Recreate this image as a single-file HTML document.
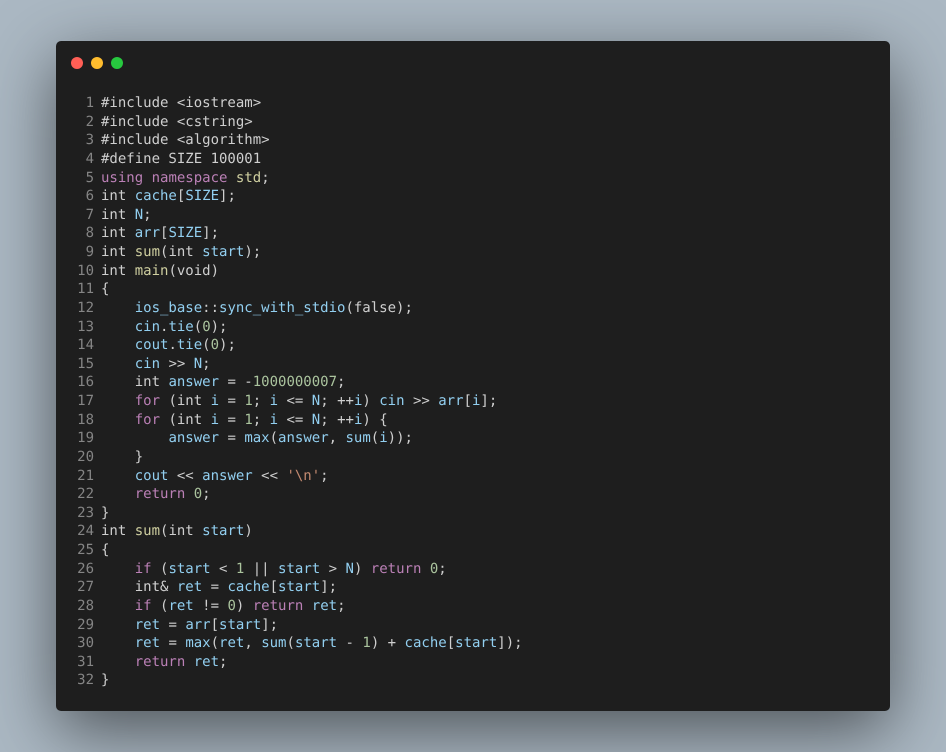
<!DOCTYPE html>
<html>
<head>
<meta charset="utf-8">
<style>
html,body{margin:0;padding:0;width:946px;height:752px;overflow:hidden;background:#abb8c3;}
#win{position:absolute;left:56px;top:41px;width:834px;height:670px;background:#1e1e1e;border-radius:5px;box-shadow:0 20px 68px rgba(0,0,0,.55);}
.d{position:absolute;top:16px;width:12px;height:12px;border-radius:50%;}
#code{position:absolute;left:101px;top:94px;margin:0;font:14px/18.62px "DejaVu Sans Mono",monospace;color:#cfcfcf;white-space:pre;filter:blur(.3px);text-rendering:geometricPrecision;}
#nums{position:absolute;left:60px;width:34px;top:94px;margin:0;font:14px/18.62px "DejaVu Sans Mono",monospace;color:#858585;text-align:right;white-space:pre;filter:blur(.3px);text-rendering:geometricPrecision;}
.k{color:#bb80b6}.v{color:#92cff0}.f{color:#cfcfa0}.n{color:#abc49e}.s{color:#c48a70}
</style>
</head>
<body>
<div id="win">
<div class="d" style="left:15px;background:#ff5f56"></div>
<div class="d" style="left:35px;background:#ffbd2e"></div>
<div class="d" style="left:55px;background:#27c93f"></div>
</div>
<pre id="nums">1
2
3
4
5
6
7
8
9
10
11
12
13
14
15
16
17
18
19
20
21
22
23
24
25
26
27
28
29
30
31
32</pre>
<pre id="code">#include &lt;iostream&gt;
#include &lt;cstring&gt;
#include &lt;algorithm&gt;
#define SIZE 100001
<span class="k">using</span> <span class="k">namespace</span> <span class="f">std</span>;
int <span class="v">cache</span>[<span class="v">SIZE</span>];
int <span class="v">N</span>;
int <span class="v">arr</span>[<span class="v">SIZE</span>];
int <span class="f">sum</span>(int <span class="v">start</span>);
int <span class="f">main</span>(void)
{
    <span class="v">ios_base</span>::<span class="v">sync_with_stdio</span>(false);
    <span class="v">cin</span>.<span class="v">tie</span>(<span class="n">0</span>);
    <span class="v">cout</span>.<span class="v">tie</span>(<span class="n">0</span>);
    <span class="v">cin</span> &gt;&gt; <span class="v">N</span>;
    int <span class="v">answer</span> = -<span class="n">1000000007</span>;
    <span class="k">for</span> (int <span class="v">i</span> = <span class="n">1</span>; <span class="v">i</span> &lt;= <span class="v">N</span>; ++<span class="v">i</span>) <span class="v">cin</span> &gt;&gt; <span class="v">arr</span>[<span class="v">i</span>];
    <span class="k">for</span> (int <span class="v">i</span> = <span class="n">1</span>; <span class="v">i</span> &lt;= <span class="v">N</span>; ++<span class="v">i</span>) {
        <span class="v">answer</span> = <span class="v">max</span>(<span class="v">answer</span>, <span class="v">sum</span>(<span class="v">i</span>));
    }
    <span class="v">cout</span> &lt;&lt; <span class="v">answer</span> &lt;&lt; <span class="s">'\n'</span>;
    <span class="k">return</span> <span class="n">0</span>;
}
int <span class="f">sum</span>(int <span class="v">start</span>)
{
    <span class="k">if</span> (<span class="v">start</span> &lt; <span class="n">1</span> || <span class="v">start</span> &gt; <span class="v">N</span>) <span class="k">return</span> <span class="n">0</span>;
    int&amp; <span class="v">ret</span> = <span class="v">cache</span>[<span class="v">start</span>];
    <span class="k">if</span> (<span class="v">ret</span> != <span class="n">0</span>) <span class="k">return</span> <span class="v">ret</span>;
    <span class="v">ret</span> = <span class="v">arr</span>[<span class="v">start</span>];
    <span class="v">ret</span> = <span class="v">max</span>(<span class="v">ret</span>, <span class="v">sum</span>(<span class="v">start</span> - <span class="n">1</span>) + <span class="v">cache</span>[<span class="v">start</span>]);
    <span class="k">return</span> <span class="v">ret</span>;
}</pre>
</body>
</html>
